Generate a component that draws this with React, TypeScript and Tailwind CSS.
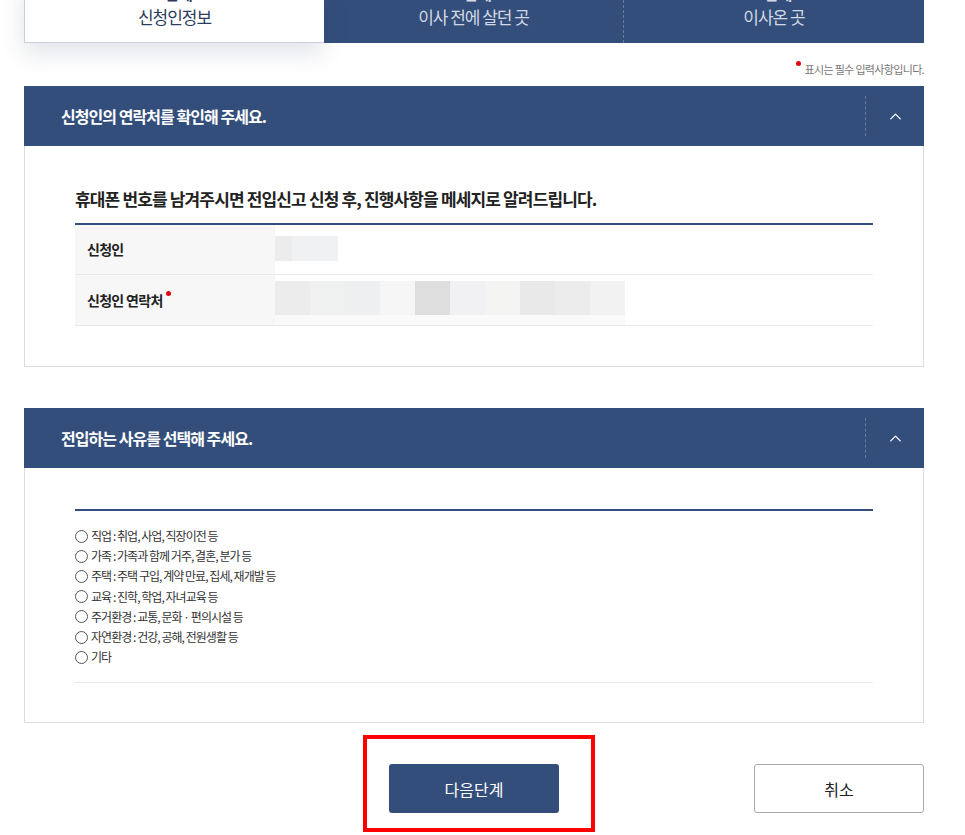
import { ChevronUp } from "lucide-react";

const NAVY = "bg-[#344e7b]";

const REASONS = [
  "직업 : 취업, 사업, 직장이전 등",
  "가족 : 가족과 함께 거주, 결혼, 분가 등",
  "주택 : 주택 구입, 계약 만료, 집세, 재개발 등",
  "교육 : 진학, 학업, 자녀교육 등",
  "주거환경 : 교통, 문화 · 편의시설 등",
  "자연환경 : 건강, 공해, 전원생활 등",
  "기타",
];

const MOSAIC = [
  "bg-[#ececec]",
  "bg-[#eff0f0]",
  "bg-[#eeeff1]",
  "bg-[#f6f6f6]",
  "bg-[#dedede]",
  "bg-[#f1f1f3]",
  "bg-[#f4f4f2]",
  "bg-[#e9e9e9]",
  "bg-[#ececec]",
  "bg-[#f2f2f2]",
];

function SectionHeader({ title }: { title: string }) {
  return (
    <div className={`flex h-[60px] items-center ${NAVY}`}>
      <h2 className="flex-1 pl-[37px] text-[16px] font-bold tracking-[-0.06em] text-white">{title}</h2>
      <div className="h-[40px] border-l border-dashed border-white/25" />
      <div className="flex w-[58px] justify-center">
        <ChevronUp size={19} strokeWidth={1.6} className="text-white" />
      </div>
    </div>
  );
}

export default function App() {
  return (
    <div
      className="h-[835px] overflow-hidden bg-white text-[#333]"
      style={{ fontFamily: '"Noto Sans CJK KR", "Noto Sans", sans-serif' }}
    >
      <div className="ml-[24px] w-[900px]">
        {/* step tabs (page is scrolled, step labels cut at top) */}
        <div className="-mt-[20px] flex h-[63px]">
          <div className="relative z-10 flex w-[300px] flex-col items-center border-b border-l border-[#c8cedb] bg-white pt-[4px] shadow-[0_10px_24px_rgba(40,55,90,0.14)]">
            <span className="text-[15px] font-bold leading-[20px] text-[#2d3c5c]">1단계</span>
            <span className="mt-[1px] text-[17px] leading-[24px] tracking-[-0.06em] text-[#2d3c5c]">신청인정보</span>
          </div>
          <div className={`flex flex-1 ${NAVY}`}>
            <div className="flex w-[300px] flex-col items-center border-r border-dashed border-white/25 pt-[4px]">
              <span className="text-[15px] font-bold leading-[20px] text-[#d3d9e4]">2단계</span>
              <span className="mt-[1px] text-[17px] leading-[24px] tracking-[-0.06em] text-[#d3d9e4]">이사 전에 살던 곳</span>
            </div>
            <div className="flex flex-1 flex-col items-center pt-[4px]">
              <span className="text-[15px] font-bold leading-[20px] text-[#d3d9e4]">3단계</span>
              <span className="mt-[1px] text-[17px] leading-[24px] tracking-[-0.06em] text-[#d3d9e4]">이사온 곳</span>
            </div>
          </div>
        </div>

        {/* required note */}
        <div className="flex h-[43px] items-start justify-end pt-[17px]">
          <span className="mr-[3px] mt-[1px] h-[5px] w-[5px] rounded-full bg-[#e60012]" />
          <span className="text-[11px] leading-[18px] tracking-[-0.06em] text-[#777]">표시는 필수 입력사항입니다.</span>
        </div>

        {/* section 1 */}
        <section>
          <SectionHeader title="신청인의 연락처를 확인해 주세요." />
          <div className="border-x border-b border-[#dcdcdc] px-[50px] pb-[40px] pt-[40px]">
            <p className="text-[17px] font-bold leading-[26px] tracking-[-0.05em] text-[#222]">
              휴대폰 번호를 남겨주시면 전입신고 신청 후, 진행사항을 메세지로 알려드립니다.
            </p>
            <div className="mt-[11px] border-t-2 border-[#344e7b]">
              <div className="flex h-[50px] border-b border-[#e8e8e8]">
                <div className="flex w-[200px] items-center bg-[#f7f7f7] pl-[12px] text-[14px] font-bold tracking-[-0.05em] text-[#222]">
                  신청인
                </div>
                <div className="flex pt-[11px]">
                  <span className="h-[25px] w-[17px] bg-[#ececec]" />
                  <span className="h-[25px] w-[46px] bg-[#f0f1f2]" />
                </div>
              </div>
              <div className="flex h-[51px] border-b border-[#e8e8e8]">
                <div className="flex w-[200px] items-start bg-[#f7f7f7] pl-[12px] pt-[15px] text-[14px] font-bold tracking-[-0.05em] text-[#222]">
                  신청인 연락처
                  <span className="ml-[3px] mt-[1px] h-[5px] w-[5px] rounded-full bg-[#e60012]" />
                </div>
                <div className="flex flex-col pt-[6px]">
                  <div className="flex h-[35px]">
                    {MOSAIC.map((c, i) => (
                      <span key={i} className={`w-[35px] ${c}`} />
                    ))}
                  </div>
                  <div className="h-[10px] w-[350px] bg-[#fafafa]" />
                </div>
              </div>
            </div>
          </div>
        </section>

        {/* section 2 */}
        <section className="mt-[41px]">
          <SectionHeader title="전입하는 사유를 선택해 주세요." />
          <div className="border-x border-b border-[#dcdcdc] px-[50px] pb-[39px] pt-[41px]">
            <div className="border-t-2 border-[#344e7b] pb-[15px] pt-[15px]">
              <ul className="flex flex-col">
                {REASONS.map((r) => (
                  <li key={r} className="flex h-[20.2px] items-center text-[12px] tracking-[-0.08em] text-[#333]">
                    <span className="mr-[3px] h-[13px] w-[13px] rounded-full border border-[#555] bg-white" />
                    {r}
                  </li>
                ))}
              </ul>
            </div>
            <div className="border-t border-[#e8e8e8]" />
          </div>
        </section>

        {/* buttons */}
        <div className="mt-[12px] flex items-start">
          <div className="ml-[339px] border-4 border-[#ff0000] pb-[15px] pl-[22px] pr-[32px] pt-[25px]">
            <button className={`h-[49px] w-[170px] rounded-[3px] text-[16px] text-white ${NAVY}`}>다음단계</button>
          </div>
          <button className="ml-auto mt-[29px] h-[49px] w-[170px] rounded-[3px] border border-[#aaa] bg-white text-[16px] text-[#222]">
            취소
          </button>
        </div>
      </div>
    </div>
  );
}
